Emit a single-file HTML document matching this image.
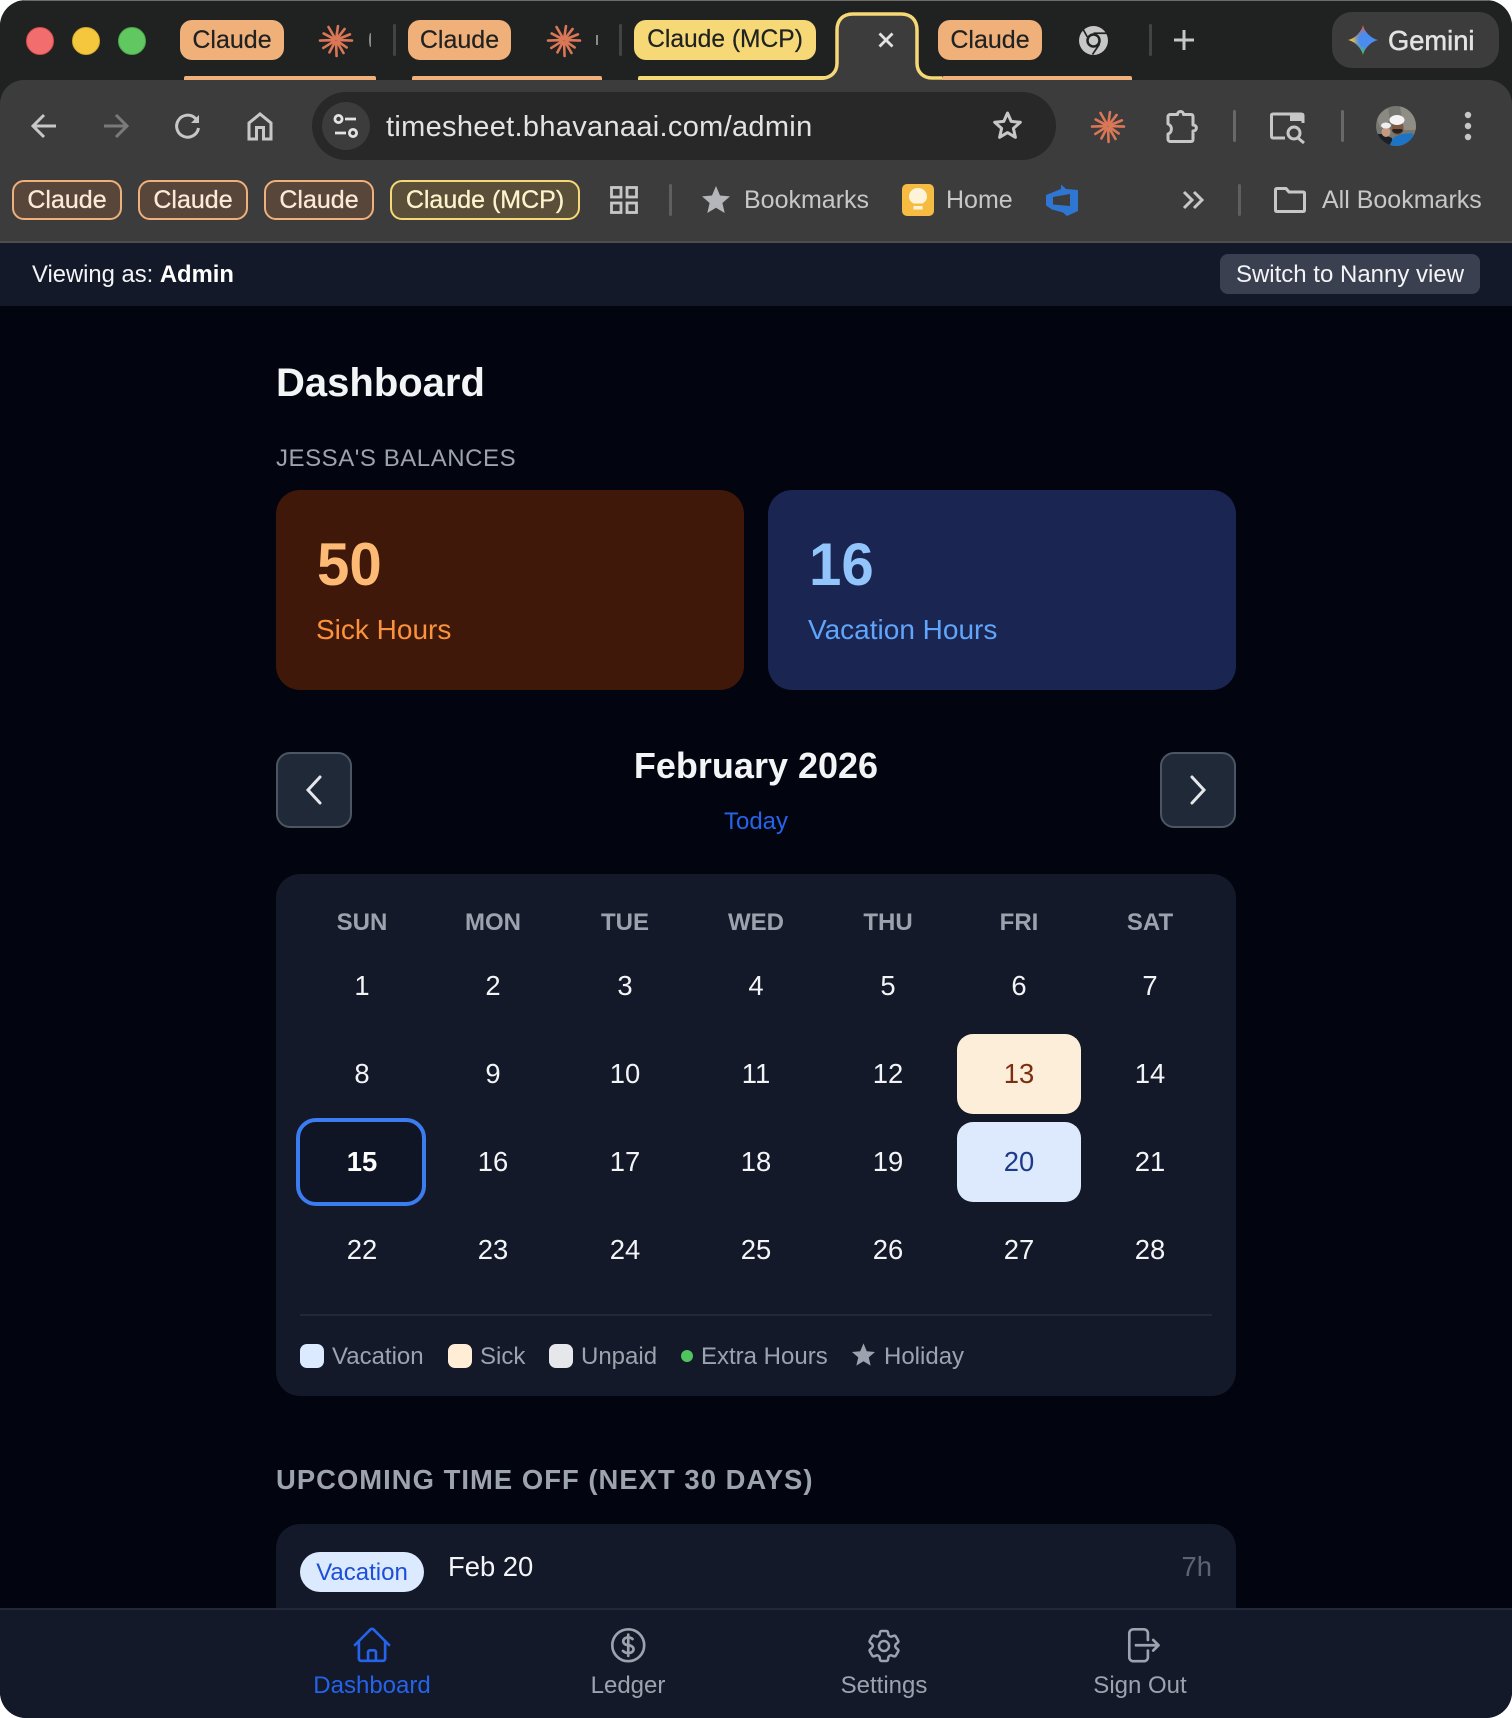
<!DOCTYPE html>
<html lang="en"><head><meta charset="utf-8"><title>Timesheet Dashboard</title>
<style>
*{box-sizing:border-box;margin:0;padding:0}
html,body{width:1512px;height:1718px;background:#fff;overflow:hidden}
body{font-family:"Liberation Sans",sans-serif}
#w{position:absolute;left:0;top:0;width:1512px;height:1718px;border-radius:26px;overflow:hidden;background:#02050f}
.a{position:absolute}
.t{position:absolute;white-space:nowrap;line-height:40px;height:40px}
.c{transform:translateX(-50%)}
.pill{position:absolute;top:20px;height:40px;border-radius:12px;font-size:25px;line-height:40px;text-align:center;color:#202222;-webkit-text-stroke:.2px #202222}
.o{background:#f0b07a}.y{background:#f6d976}
.ul{position:absolute;top:76px;height:4px;border-radius:2px 2px 0 0}
.sep{position:absolute;width:3px;border-radius:2px;background:#424444}
.bp{position:absolute;top:180px;height:40px;border-radius:12px;border:2px solid #f0b07a;background:#59463a;color:#fde9d7;font-size:25px;line-height:36px;text-align:center;-webkit-text-stroke:.3px #fde9d7}
.bp.ym{border-color:#f6d976;background:#5a4f38;color:#fdf3cc;-webkit-text-stroke:.3px #fdf3cc}
.bt{color:#c7c7c7;font-size:25px}
.ic{position:absolute;overflow:visible}
.cell{position:absolute;width:124px;height:80px;line-height:80px;text-align:center;font-size:27.4px;color:#f3f4f6}
.wd{position:absolute;width:124px;text-align:center;top:903px;line-height:40px;font-size:24px;font-weight:700;color:#9ca3af}
.sw{position:absolute;top:1344px;width:24px;height:24px;border-radius:7px}
.lg{position:absolute;top:1337px;line-height:40px;font-size:24px;color:#9ca3af;white-space:nowrap}
.nl{position:absolute;top:1666px;line-height:40px;font-size:24px;color:#9ca3af;transform:translateX(-50%);white-space:nowrap}
</style></head><body><div id="w">

<!-- title bar -->
<div class="a" style="left:0;top:0;width:1512px;height:120px;background:#202222;border-top:1px solid #6b6b6b"></div>
<div class="a" style="left:26px;top:27px;width:28px;height:28px;border-radius:50%;background:#f26d6d;border:1px solid #d94c4c"></div>
<div class="a" style="left:72px;top:27px;width:28px;height:28px;border-radius:50%;background:#f5c73d;border:1px solid #d9a92d"></div>
<div class="a" style="left:118px;top:27px;width:28px;height:28px;border-radius:50%;background:#60c761;border:1px solid #4aa84c"></div>

<div class="pill o" style="left:180px;width:104px">Claude</div>
<svg class="ic" style="left:320px;top:24px" width="32" height="32" viewBox="-16 -16 32 32" stroke="#d97757" stroke-width="2.6" stroke-linecap="round"><path d="M0-1V-14" transform="rotate(8)"/><path d="M0-2V-14" transform="rotate(38)"/><path d="M0-2V-15" transform="rotate(68)"/><path d="M0-2V-16" transform="rotate(92)"/><path d="M0-2V-13" transform="rotate(125)"/><path d="M0-2V-15" transform="rotate(150)"/><path d="M0-2V-16" transform="rotate(178)"/><path d="M0-2V-14" transform="rotate(208)"/><path d="M0-2V-15" transform="rotate(238)"/><path d="M0-2V-16" transform="rotate(268)"/><path d="M0-2V-14" transform="rotate(298)"/><path d="M0-2V-15" transform="rotate(330)"/></svg>
<div class="a" style="left:369px;top:33px;width:3px;height:14px;border-left:2px solid #8a8a8a;border-radius:50%"></div>
<div class="ul" style="left:184px;width:192px;background:#f0b07a"></div>
<div class="sep" style="left:393px;top:24px;height:32px"></div>

<div class="pill o" style="left:408px;width:103px">Claude</div>
<svg class="ic" style="left:548px;top:24px" width="32" height="32" viewBox="-16 -16 32 32" stroke="#d97757" stroke-width="2.6" stroke-linecap="round"><path d="M0-1V-14" transform="rotate(8)"/><path d="M0-2V-14" transform="rotate(38)"/><path d="M0-2V-15" transform="rotate(68)"/><path d="M0-2V-16" transform="rotate(92)"/><path d="M0-2V-13" transform="rotate(125)"/><path d="M0-2V-15" transform="rotate(150)"/><path d="M0-2V-16" transform="rotate(178)"/><path d="M0-2V-14" transform="rotate(208)"/><path d="M0-2V-15" transform="rotate(238)"/><path d="M0-2V-16" transform="rotate(268)"/><path d="M0-2V-14" transform="rotate(298)"/><path d="M0-2V-15" transform="rotate(330)"/></svg>
<div class="a" style="left:596px;top:35px;width:2px;height:10px;background:#8a8a8a"></div>
<div class="ul" style="left:412px;width:190px;background:#f0b07a"></div>
<div class="sep" style="left:619px;top:24px;height:32px"></div>

<div class="pill y" style="left:634px;width:182px;font-size:24.600px">Claude (MCP)</div>
<div class="ul" style="left:638px;width:190px;background:#f6d976"></div>

<!-- active tab -->
<svg class="ic" style="left:815px;top:10px" width="135" height="72" viewBox="0 0 135 72"><path d="M0 70H7C16 70 22 63 22 54V20C22 10 28 4 38 4H86C96 4 102 10 102 20V54C102 63 108 70 117 70H127V72H0Z" fill="#3c3c3c"/><path d="M0 68H7C16 68 22 62 22 53V20C22 10 28 4 38 4H86C96 4 102 10 102 20V53C102 62 108 68 117 68H127" fill="none" stroke="#f6d976" stroke-width="3.5"/></svg>
<svg class="ic" style="left:878px;top:32px" width="16" height="16" viewBox="0 0 16 16" stroke="#e3e3e3" stroke-width="2.8"><path d="M1.500 1.500L14.500 14.500M14.500 1.500L1.500 14.500"/></svg>

<div class="pill o" style="left:938px;width:104px">Claude</div>
<svg class="ic" style="left:1079px;top:26px" width="29" height="29" viewBox="0 0 28 28"><circle cx="14" cy="14" r="14" fill="#c7c7c7"/><circle cx="14" cy="14" r="7" fill="#202222"/><circle cx="14" cy="14" r="4.6" fill="#c7c7c7"/><path d="M14 7H27.5M8 10.5L3 1.5M19.8 17.5L13 27.5" stroke="#202222" stroke-width="1.6" fill="none"/></svg>
<div class="ul" style="left:942px;width:190px;background:#f0b07a"></div>
<div class="sep" style="left:1149px;top:24px;height:32px"></div>
<svg class="ic" style="left:1173px;top:29px" width="22" height="22" viewBox="0 0 22 22" stroke="#c7c7c7" stroke-width="3"><path d="M11 1V21M1 11H21"/></svg>

<div class="a" style="left:1332px;top:12px;width:167px;height:56px;border-radius:20px;background:#3c3c3c"></div>
<div class="a" style="left:1348px;top:25px;width:30px;height:30px;clip-path:path('M15 0C16.500 7 23 13.500 30 15C23 16.500 16.500 23 15 30C13.500 23 7 16.500 0 15C7 13.500 13.500 7 15 0Z');background:radial-gradient(circle at 58% 50%,#4a8cf0 0 28%,rgba(74,140,240,0) 60%),conic-gradient(#e8584f 0deg,#8a6fd0 45deg,#4a8cf0 90deg,#4fb58a 150deg,#4cc35f 180deg,#f2c63f 265deg,#ef9a3c 300deg,#e8584f 360deg)"></div>
<div class="t" style="left:1388px;top:21px;font-size:27.300px;color:#e3e3e3;-webkit-text-stroke:.5px #e3e3e3">Gemini</div>

<!-- toolbar -->
<div class="a" style="left:0;top:80px;width:1512px;height:161px;background:#3c3c3c;border-radius:24px 24px 0 0"></div>
<svg class="ic" style="left:836px;top:78px" width="82" height="4"><rect width="82" height="4" fill="#3c3c3c"/></svg>
<div class="a" style="left:0;top:241px;width:1512px;height:2px;background:#4e4e4e"></div>

<svg class="ic" style="left:30px;top:112px" width="28" height="28" viewBox="0 0 28 28" fill="none" stroke="#c7c7c7" stroke-width="3"><path d="M26 14H3M14 3L3 14L14 25"/></svg>
<svg class="ic" style="left:102px;top:112px" width="28" height="28" viewBox="0 0 28 28" fill="none" stroke="#7a7a7a" stroke-width="3"><path d="M2 14H25M14 3L25 14L14 25"/></svg>
<svg class="ic" style="left:174px;top:112px" width="28" height="28" viewBox="0 0 28 28" fill="none" stroke="#c7c7c7" stroke-width="3"><path d="M24.5 16A11 11 0 1 1 21 6L24 9"/><path d="M25 3V11H17" fill="#c7c7c7" stroke="none"/></svg>
<svg class="ic" style="left:247px;top:112px" width="26" height="28" viewBox="0 0 26 28" fill="none" stroke="#c7c7c7" stroke-width="3"><path d="M2 27V11L13 2L24 11V27H16.5V15.5H9.5V27Z"/></svg>

<div class="a" style="left:312px;top:92px;width:744px;height:68px;border-radius:34px;background:#282828"></div>
<div class="a" style="left:322px;top:102px;width:48px;height:48px;border-radius:50%;background:#3c3c3c"></div>
<svg class="ic" style="left:333px;top:113px" width="26" height="26" viewBox="0 0 26 26" fill="none" stroke="#e3e3e3" stroke-width="2.8"><circle cx="5.5" cy="6" r="3.6"/><path d="M12 6H23M2 20H13"/><circle cx="20" cy="20" r="3.6"/></svg>
<div class="t" style="left:386px;top:107px;font-size:29px;color:#e3e3e3;letter-spacing:.31px">timesheet.bhavanaai.com/admin</div>
<svg class="ic" style="left:992px;top:110px" width="31" height="30" viewBox="0 0 31 30" fill="none" stroke="#c7c7c7" stroke-width="3" stroke-linejoin="round"><path d="M15.5 3L19.2 11.4L28.3 12.3L21.4 18.4L23.4 27.3L15.5 22.6L7.6 27.3L9.6 18.4L2.7 12.3L11.8 11.4Z"/></svg>

<svg class="ic" style="left:1092px;top:110px" width="32" height="32" viewBox="-16 -16 32 32" stroke="#d97757" stroke-width="2.6" stroke-linecap="round"><path d="M0-1V-14" transform="rotate(8)"/><path d="M0-2V-14" transform="rotate(38)"/><path d="M0-2V-15" transform="rotate(68)"/><path d="M0-2V-16" transform="rotate(92)"/><path d="M0-2V-13" transform="rotate(125)"/><path d="M0-2V-15" transform="rotate(150)"/><path d="M0-2V-16" transform="rotate(178)"/><path d="M0-2V-14" transform="rotate(208)"/><path d="M0-2V-15" transform="rotate(238)"/><path d="M0-2V-16" transform="rotate(268)"/><path d="M0-2V-14" transform="rotate(298)"/><path d="M0-2V-15" transform="rotate(330)"/></svg>
<svg class="ic" style="left:1165px;top:108px" width="34" height="36" viewBox="0 0 34 36" fill="none" stroke="#c7c7c7" stroke-width="3" stroke-linejoin="round"><path d="M3 8.500C3 7.500 4 6.500 5 6.500H12.500C12.500 2.500 18.500 2.500 18.500 6.500H26C27.500 6.500 28 7.500 28 8.500V17C32.500 17 32.500 23 28 23V31C28 32.500 27.500 33.500 26 33.500H5C4 33.500 3 32.500 3 31V26C7.500 24.500 7.500 17.500 3 16Z"/></svg>
<div class="sep" style="left:1233px;top:110px;height:32px;background:#686868"></div>
<svg class="ic" style="left:1270px;top:112px" width="36" height="32" viewBox="0 0 36 32" fill="none" stroke="#c7c7c7" stroke-width="3"><path d="M15 26H3C2 26 1.500 25.500 1.500 24V3.500C1.500 2.500 2 2 3 2H31C32.500 2 33 2.500 33 3.500V11"/><path d="M20 2H33V9H20Z" fill="#c7c7c7" stroke="none"/><circle cx="24" cy="21" r="6"/><path d="M28 26L34 31"/></svg>
<div class="sep" style="left:1341px;top:110px;height:32px;background:#686868"></div>
<svg class="ic" style="left:1376px;top:106px" width="40" height="40" viewBox="0 0 40 40"><defs><clipPath id="av"><circle cx="20" cy="20" r="20"/></clipPath></defs><g clip-path="url(#av)"><rect width="40" height="40" fill="#777772"/><path d="M24 0L40 6V24H28Z" fill="#8f8d86"/><path d="M0 10L12 2L14 14L4 22Z" fill="#8a8a82"/><path d="M0 28H6L16 32L17 40H0Z" fill="#1a2024"/><path d="M13 40L18 31L26 28L36 27L40 34V40Z" fill="#1e74c4"/><ellipse cx="21.500" cy="22" rx="6" ry="7" fill="#7d5a44"/><ellipse cx="10" cy="26" rx="4.500" ry="5" fill="#c59a83"/><ellipse cx="21" cy="14" rx="7.500" ry="5" fill="#f4f4f4"/><ellipse cx="10" cy="19.500" rx="5" ry="3" fill="#eeeeee"/><path d="M16 25C19 28.500 24 28.500 27 25L26 23H17Z" fill="#2a211c"/></g></svg>
<svg class="ic" style="left:1462px;top:111px" width="12" height="30" viewBox="0 0 12 30" fill="#c7c7c7"><circle cx="6" cy="4" r="3.200"/><circle cx="6" cy="15" r="3.200"/><circle cx="6" cy="26" r="3.200"/></svg>

<!-- bookmarks -->
<div class="bp" style="left:12px;width:110px">Claude</div>
<div class="bp" style="left:138px;width:110px">Claude</div>
<div class="bp" style="left:264px;width:110px">Claude</div>
<div class="bp ym" style="left:390px;width:190px">Claude (MCP)</div>
<svg class="ic" style="left:610px;top:186px" width="28" height="28" viewBox="0 0 28 28" fill="none" stroke="#c7c7c7" stroke-width="2.800"><rect x="1.500" y="1.500" width="9.500" height="9.500"/><rect x="17" y="1.500" width="9.500" height="9.500"/><rect x="1.500" y="17" width="9.500" height="9.500"/><rect x="17" y="17" width="9.500" height="9.500"/></svg>
<div class="sep" style="left:669px;top:184px;height:32px;background:#5f5f5f"></div>
<svg class="ic" style="left:702px;top:186px" width="28" height="27" viewBox="0 0 28 27" fill="#b4b6bb"><path d="M14 0L18 9.500L28 10.400L20.400 17L22.700 27L14 21.700L5.300 27L7.600 17L0 10.400L10 9.500Z"/></svg>
<div class="t bt" style="left:744px;top:180px">Bookmarks</div>
<div class="a" style="left:902px;top:184px;width:32px;height:32px;border-radius:5px;background:#f6bc41"></div>
<svg class="ic" style="left:908px;top:188px" width="20" height="24" viewBox="0 0 20 24"><path d="M10 0C15.500 0 19 4 19 8.500C19 12 17 14 14.500 15.500H5.500C3 14 1 12 1 8.500C1 4 4.500 0 10 0Z" fill="#fdf3d8"/><rect x="5.500" y="18" width="9" height="3.500" fill="#fdf3d8"/></svg>
<div class="t bt" style="left:946px;top:180px">Home</div>
<svg class="ic" style="left:1046px;top:184px" width="32" height="32" viewBox="0 0 32 32"><path fill-rule="evenodd" d="M15 0.500L20 5L32 6V27L21 32L17 28.500L6 25.500L0 21.500V11L15 5ZM7 13L24 10V22L7 20.500Z" fill="#2f76d2"/></svg>
<svg class="ic" style="left:1182px;top:191px" width="23" height="18" viewBox="0 0 23 18" fill="none" stroke="#c7c7c7" stroke-width="3"><path d="M2 1L10 9L2 17M12 1L20 9L12 17"/></svg>
<div class="sep" style="left:1238px;top:184px;height:32px;background:#5f5f5f"></div>
<svg class="ic" style="left:1274px;top:187px" width="32" height="26" viewBox="0 0 32 26" fill="none" stroke="#c7c7c7" stroke-width="3" stroke-linejoin="round"><path d="M1.500 3C1.500 2 2 1.500 3 1.500H12L15 5H29C30 5 30.500 5.500 30.500 6.500V23C30.500 24 30 24.500 29 24.500H3C2 24.500 1.500 24 1.500 23Z"/></svg>
<div class="t bt" style="left:1322px;top:180px">All Bookmarks</div>

<!-- banner -->
<div class="a" style="left:0;top:243px;width:1512px;height:63px;background:#131929"></div>
<div class="t" style="left:32px;top:255px;font-size:23.800px;color:#f3f4f6">Viewing as: <b style="color:#fff">Admin</b></div>
<div class="a" style="left:1220px;top:254px;width:260px;height:40px;border-radius:8px;background:#3a4050;color:#f3f4f6;font-size:24px;line-height:42px;text-align:center">Switch to Nanny view</div>

<!-- main -->
<div class="t" style="left:276px;top:363px;font-size:40px;font-weight:700;color:#f3f4f6">Dashboard</div>
<div class="t" style="left:276px;top:439px;font-size:24px;color:#9ca3af;letter-spacing:.55px">JESSA'S BALANCES</div>

<div class="a" style="left:276px;top:490px;width:468px;height:200px;border-radius:24px;background:#3f1809"></div>
<div class="a" style="left:768px;top:490px;width:468px;height:200px;border-radius:24px;background:#1a2551"></div>
<div class="t" style="left:317px;top:545px;font-size:60px;font-weight:700;color:#fdba74;transform:scaleX(.97);transform-origin:left">50</div>
<div class="t" style="left:809px;top:545px;font-size:60px;font-weight:700;color:#93c5fd;transform:scaleX(.97);transform-origin:left">16</div>
<div class="t" style="left:316px;top:610px;font-size:28px;color:#fb923c">Sick Hours</div>
<div class="t" style="left:808px;top:610px;font-size:28px;color:#60a5fa">Vacation Hours</div>

<div class="a" style="left:276px;top:752px;width:76px;height:76px;border-radius:14px;background:#1f2937;border:2px solid #4b5563"></div>
<div class="a" style="left:1160px;top:752px;width:76px;height:76px;border-radius:14px;background:#1f2937;border:2px solid #4b5563"></div>
<svg class="ic" style="left:305px;top:775px" width="18" height="30" viewBox="0 0 18 30" fill="none" stroke="#e5e7eb" stroke-width="3" stroke-linecap="round"><path d="M15 2L3 15L15 28"/></svg>
<svg class="ic" style="left:1189px;top:775px" width="18" height="30" viewBox="0 0 18 30" fill="none" stroke="#e5e7eb" stroke-width="3" stroke-linecap="round"><path d="M3 2L15 15L3 28"/></svg>
<div class="t c" style="left:756px;top:746px;font-size:36px;font-weight:700;color:#f3f4f6">February 2026</div>
<div class="t c" style="left:756px;top:802px;font-size:24px;color:#2563eb">Today</div>

<!-- calendar -->
<div class="a" style="left:276px;top:874px;width:960px;height:522px;border-radius:24px;background:#131929"></div>
<div class="wd" style="left:300px">SUN</div><div class="wd" style="left:431px">MON</div><div class="wd" style="left:563px">TUE</div><div class="wd" style="left:694px">WED</div><div class="wd" style="left:826px">THU</div><div class="wd" style="left:957px">FRI</div><div class="wd" style="left:1088px">SAT</div>

<div class="cell" style="left:300px;top:946px">1</div><div class="cell" style="left:431px;top:946px">2</div><div class="cell" style="left:563px;top:946px">3</div><div class="cell" style="left:694px;top:946px">4</div><div class="cell" style="left:826px;top:946px">5</div><div class="cell" style="left:957px;top:946px">6</div><div class="cell" style="left:1088px;top:946px">7</div>

<div class="cell" style="left:300px;top:1034px">8</div><div class="cell" style="left:431px;top:1034px">9</div><div class="cell" style="left:563px;top:1034px">10</div><div class="cell" style="left:694px;top:1034px">11</div><div class="cell" style="left:826px;top:1034px">12</div><div class="cell" style="left:957px;top:1034px;background:#fdeed9;color:#7c2d12;border-radius:16px">13</div><div class="cell" style="left:1088px;top:1034px">14</div>

<div class="a" style="left:296px;top:1118px;width:130px;height:88px;border:4px solid #3b7cf0;border-radius:20px;background:#0f1524"></div>
<div class="cell" style="left:300px;top:1122px;font-weight:700;color:#fff">15</div><div class="cell" style="left:431px;top:1122px">16</div><div class="cell" style="left:563px;top:1122px">17</div><div class="cell" style="left:694px;top:1122px">18</div><div class="cell" style="left:826px;top:1122px">19</div><div class="cell" style="left:957px;top:1122px;background:#dde9fd;color:#1e3a8a;border-radius:16px">20</div><div class="cell" style="left:1088px;top:1122px">21</div>

<div class="cell" style="left:300px;top:1210px">22</div><div class="cell" style="left:431px;top:1210px">23</div><div class="cell" style="left:563px;top:1210px">24</div><div class="cell" style="left:694px;top:1210px">25</div><div class="cell" style="left:826px;top:1210px">26</div><div class="cell" style="left:957px;top:1210px">27</div><div class="cell" style="left:1088px;top:1210px">28</div>

<div class="a" style="left:300px;top:1314px;width:912px;height:2px;background:#1f2937"></div>
<div class="sw" style="left:300px;background:#dbeafe"></div><div class="lg" style="left:332px">Vacation</div>
<div class="sw" style="left:448px;background:#ffedd5"></div><div class="lg" style="left:480px">Sick</div>
<div class="sw" style="left:549px;background:#e5e7eb"></div><div class="lg" style="left:581px">Unpaid</div>
<div class="a" style="left:681px;top:1350px;width:12px;height:12px;border-radius:50%;background:#4fc45f"></div><div class="lg" style="left:701px">Extra Hours</div>
<svg class="ic" style="left:852px;top:1343px" width="23" height="23" viewBox="0 0 28 27" fill="#9ca3af"><path d="M14 0L18 9.500L28 10.400L20.400 17L22.700 27L14 21.700L5.300 27L7.600 17L0 10.400L10 9.500Z"/></svg><div class="lg" style="left:884px">Holiday</div>

<div class="t" style="left:276px;top:1460px;font-size:27.400px;font-weight:700;color:#9ca3af;letter-spacing:1.04px">UPCOMING TIME OFF (NEXT 30 DAYS)</div>
<div class="a" style="left:276px;top:1524px;width:960px;height:130px;border-radius:24px;background:#131929"></div>
<div class="a" style="left:300px;top:1552px;width:124px;height:40px;border-radius:20px;background:#dbeafe;color:#1d4ed8;font-size:24px;line-height:41px;text-align:center">Vacation</div>
<div class="t" style="left:448px;top:1547px;font-size:27.400px;color:#f3f4f6">Feb 20</div>
<div class="t" style="right:300px;top:1547px;font-size:27.400px;color:#5c6470">7h</div>

<!-- bottom nav -->
<div class="a" style="left:0;top:1608px;width:1512px;height:110px;background:#131929;border-top:2px solid #1f2937"></div>
<svg class="ic" style="left:351px;top:1624px" width="42" height="42" viewBox="0 0 24 24" fill="none" stroke="#2563eb" stroke-width="1.500" stroke-linecap="round" stroke-linejoin="round"><path d="m2.250 12 8.954-8.955c.44-.439 1.152-.439 1.591 0L21.750 12M4.500 9.750v10.125c0 .621.504 1.125 1.125 1.125H9.750v-4.875c0-.621.504-1.125 1.125-1.125h2.250c.621 0 1.125.504 1.125 1.125V21h4.125c.621 0 1.125-.504 1.125-1.125V9.750M8.250 21h8.250"/></svg>
<svg class="ic" style="left:606.500px;top:1624px" width="42.500" height="42.500" viewBox="0 0 24 24" fill="none" stroke="#9ca3af" stroke-width="1.500" stroke-linecap="round" stroke-linejoin="round"><path d="M12 6v12m-3-2.818.879.659c1.171.879 3.070.879 4.242 0 1.172-.879 1.172-2.303 0-3.182C13.536 12.219 12.768 12 12 12c-.725 0-1.450-.220-2.003-.659-1.106-.879-1.106-2.303 0-3.182s2.900-.879 4.006 0l.415.330M21 12a9 9 0 1 1-18 0 9 9 0 0 1 18 0Z"/></svg>
<svg class="ic" style="left:864px;top:1626px" width="40" height="40" viewBox="0 0 24 24" fill="none" stroke="#9ca3af" stroke-width="1.500" stroke-linecap="round" stroke-linejoin="round"><path d="M9.594 3.940c.090-.542.560-.940 1.110-.940h2.593c.550 0 1.020.398 1.110.940l.213 1.281c.063.374.313.686.645.870.074.040.147.083.220.127.325.196.720.257 1.075.124l1.217-.456a1.125 1.125 0 0 1 1.370.490l1.296 2.247a1.125 1.125 0 0 1-.260 1.431l-1.003.827c-.293.241-.438.613-.430.992a7.723 7.723 0 0 1 0 .255c-.008.378.137.750.430.991l1.004.827c.424.350.534.955.260 1.430l-1.298 2.247a1.125 1.125 0 0 1-1.369.491l-1.217-.456c-.355-.133-.750-.072-1.076.124a6.470 6.470 0 0 1-.220.128c-.331.183-.581.495-.644.869l-.213 1.281c-.090.543-.560.940-1.110.940h-2.594c-.550 0-1.019-.398-1.110-.940l-.213-1.281c-.062-.374-.312-.686-.644-.870a6.520 6.520 0 0 1-.220-.127c-.325-.196-.720-.257-1.076-.124l-1.217.456a1.125 1.125 0 0 1-1.369-.490l-1.297-2.247a1.125 1.125 0 0 1 .260-1.431l1.004-.827c.292-.240.437-.613.430-.991a6.932 6.932 0 0 1 0-.255c.007-.380-.138-.751-.430-.992l-1.004-.827a1.125 1.125 0 0 1-.260-1.430l1.297-2.247a1.125 1.125 0 0 1 1.370-.491l1.216.456c.356.133.751.072 1.076-.124.072-.044.146-.086.220-.128.332-.183.582-.495.644-.869l.214-1.280Z"/><path d="M15 12a3 3 0 1 1-6 0 3 3 0 0 1 6 0Z"/></svg>
<svg class="ic" style="left:1119.500px;top:1624px" width="42.500" height="42.500" viewBox="0 0 24 24" fill="none" stroke="#9ca3af" stroke-width="1.500" stroke-linecap="round" stroke-linejoin="round"><path d="M15.750 9V5.250A2.250 2.250 0 0 0 13.500 3h-6a2.250 2.250 0 0 0-2.250 2.250v13.500A2.250 2.250 0 0 0 7.500 21h6a2.250 2.250 0 0 0 2.250-2.250V15m3 0 3-3m0 0-3-3m3 3H9"/></svg>
<div class="nl" style="left:372px;color:#2563eb">Dashboard</div>
<div class="nl" style="left:628px">Ledger</div>
<div class="nl" style="left:884px">Settings</div>
<div class="nl" style="left:1140px">Sign Out</div>
</div></body></html>
